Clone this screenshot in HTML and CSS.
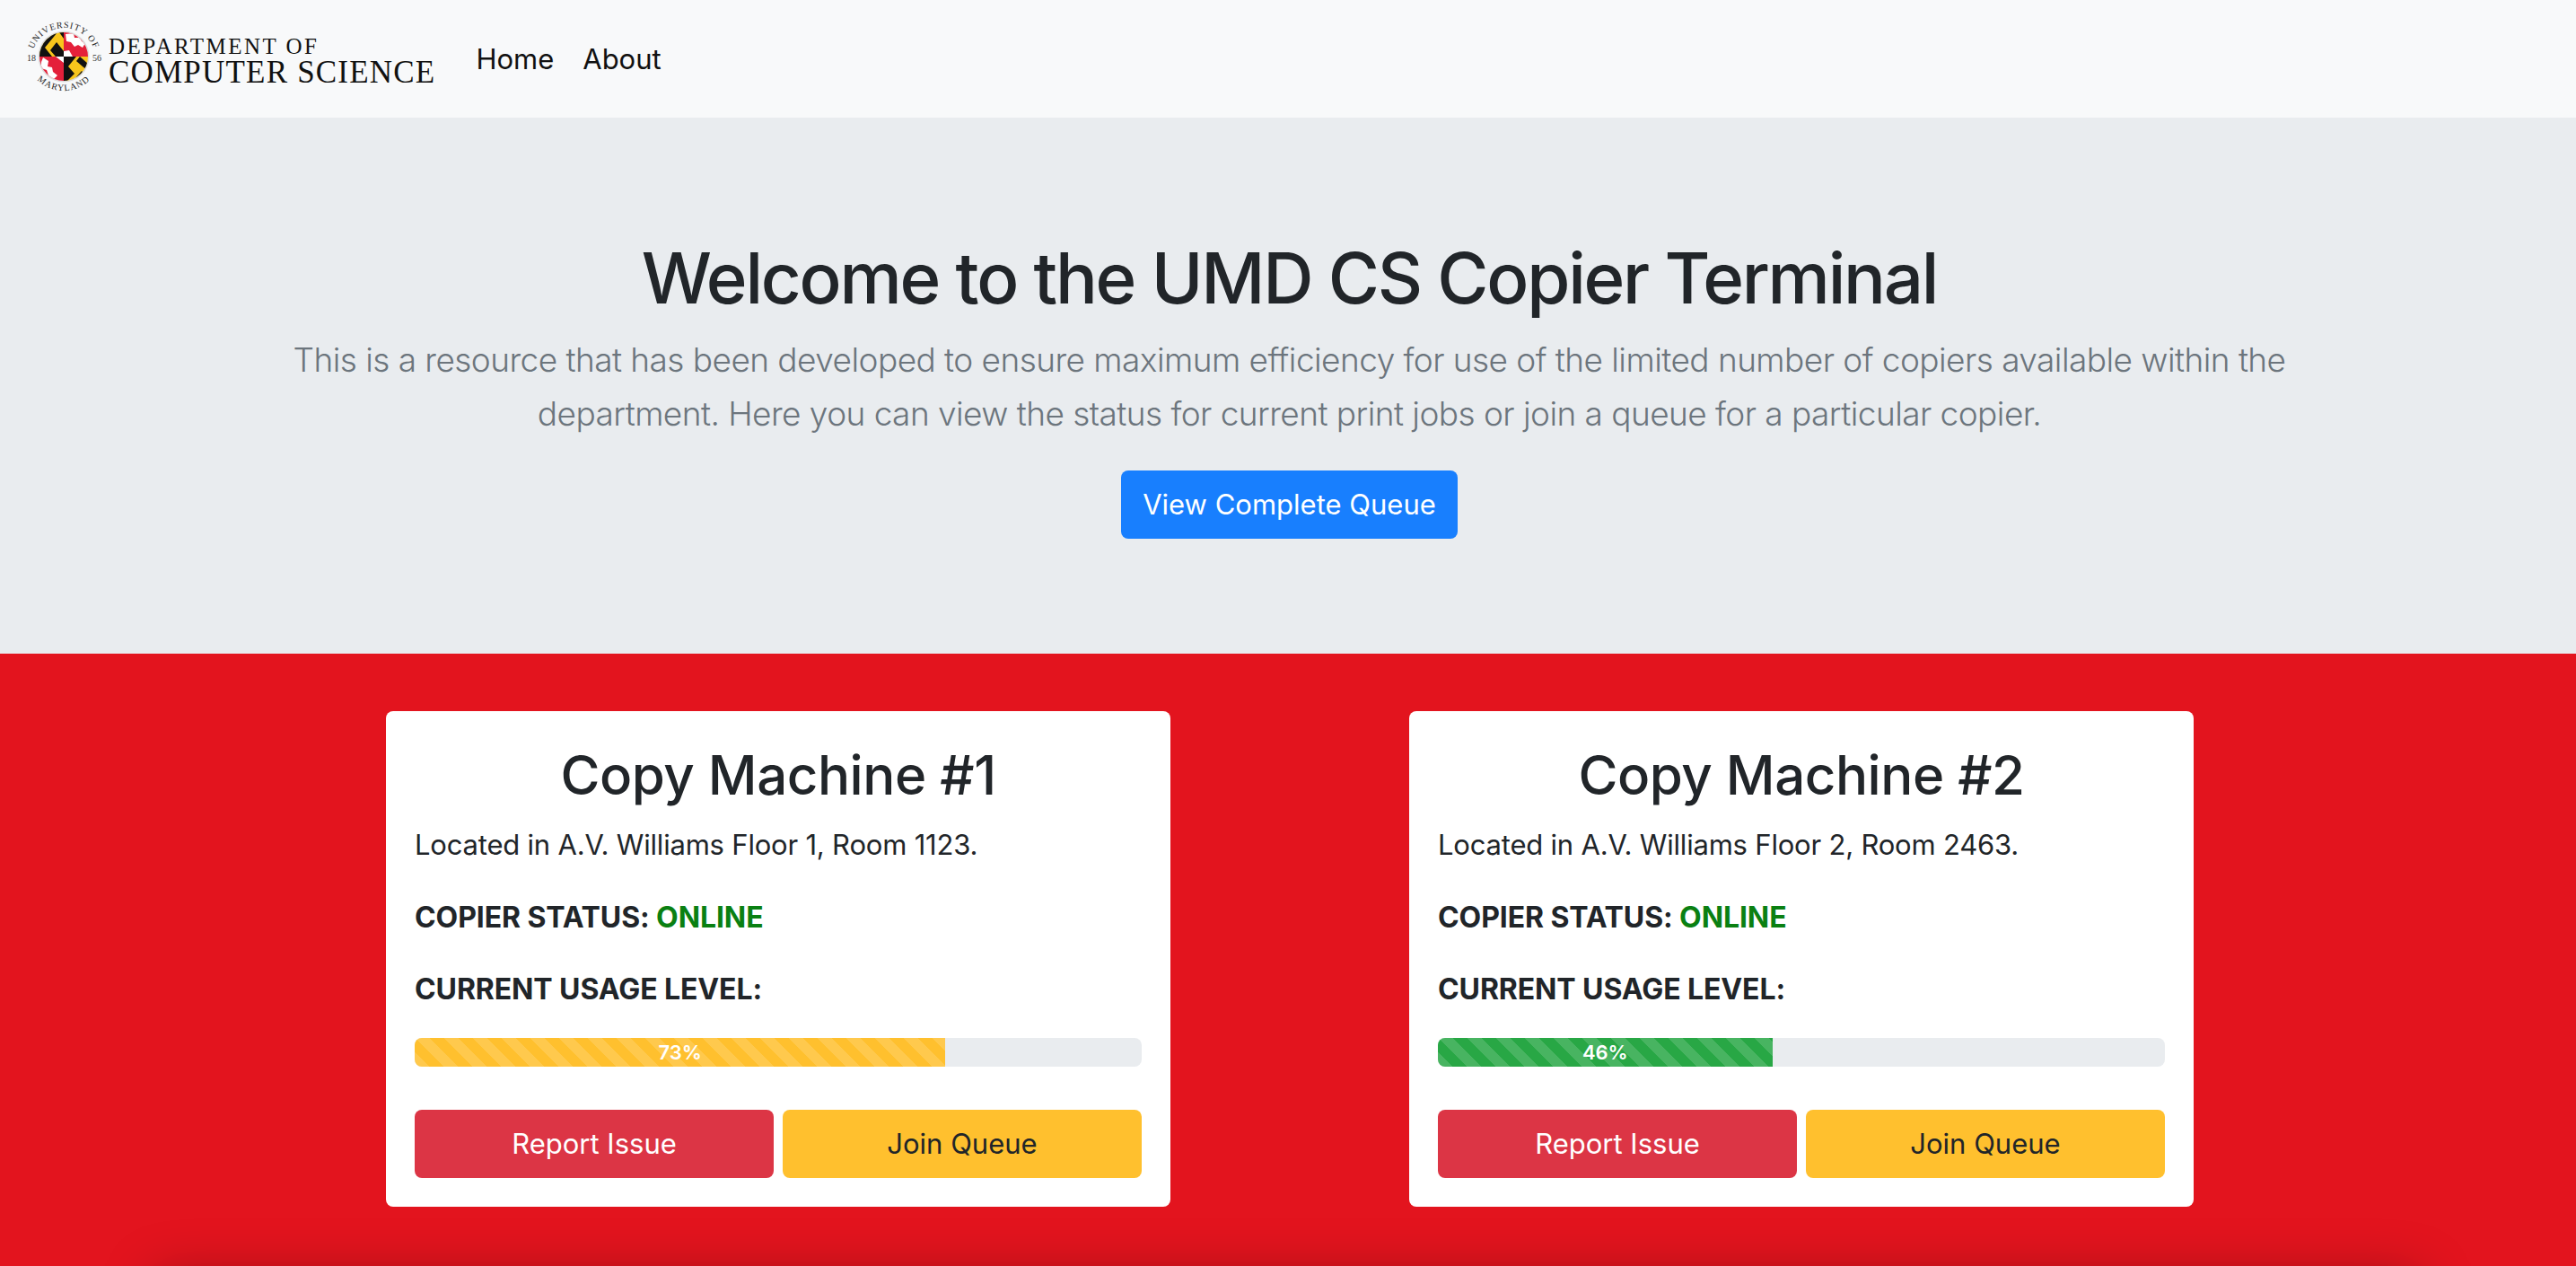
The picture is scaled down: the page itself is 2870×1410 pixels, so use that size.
FILE: index.html
```html
<!DOCTYPE html>
<html lang="en">
<head>
    <meta charset="UTF-8">
    <title>UMD CS Copier Terminal</title>
    <link rel="stylesheet" href="styles.css">
</head>
<body>
    <nav class="navbar">
        <a class="brand" href="#">
            <svg class="seal" viewBox="0 0 90 90" width="90" height="90">
                <defs>
                    <path id="sealTop" d="M9 46 A35 35 0 0 1 81 46"/>
                    <path id="sealBottom" d="M3 38 A42 42 0 0 0 87 38"/>
                    <clipPath id="globeClip"><circle cx="45" cy="42" r="27"/></clipPath>
                </defs>
                <text class="seal-ring"><textPath href="#sealTop" startOffset="50%" text-anchor="middle">UNIVERSITY OF</textPath></text>
                <text class="seal-ring"><textPath href="#sealBottom" startOffset="50%" text-anchor="middle">MARYLAND</textPath></text>
                <text class="seal-year" x="4" y="47">18</text>
                <text class="seal-year" x="77" y="47">56</text>
                <circle cx="45" cy="42" r="28.5" fill="#dcdcdc"/>
                <g clip-path="url(#globeClip)">
                    <rect x="18" y="15" width="27" height="27" fill="#f7c51c"/>
                    <path d="M18 30 L30 15 L38 15 L24 32 L32 42 L18 42 Z M36 42 L30 35 L37 26 L45 36 L45 42 Z M40 15 L45 15 L45 22 Z" fill="#111"/>
                    <rect x="45" y="15" width="27" height="27" fill="#e4203a"/>
                    <path d="M47 17 L56 16 L57 21 L63 21 L65 25 L69 27 L66 32 L61 29 L57 31 L53 26 L48 25 Z M45 36 L51 35 L55 42 L45 42 Z" fill="#fff"/>
                    <rect x="18" y="42" width="27" height="27" fill="#e4203a"/>
                    <path d="M22 43 L28 47 L27 53 L32 54 L33 59 L38 63 L33 68 L28 63 L26 57 L20 55 L20 48 Z M36 42 L45 42 L45 49 Z" fill="#fff"/>
                    <rect x="45" y="42" width="27" height="27" fill="#f7c51c"/>
                    <path d="M45 42 L59 42 L50 53 L57 61 L49 69 L45 69 Z M63 42 L72 50 L72 58 L66 53 L59 47 Z M58 66 L65 58 L70 63 L63 69 Z" fill="#111"/>
                </g>
            </svg>
            <span class="brand-text">
                <span class="brand-dept">DEPARTMENT OF</span>
                <span class="brand-name">COMPUTER SCIENCE</span>
            </span>
        </a>
        <a class="nav-link" href="#">Home</a>
        <a class="nav-link" href="#">About</a>
    </nav>

    <header class="hero">
        <h1>Welcome to the UMD CS Copier Terminal</h1>
        <p class="lead">This is a resource that has been developed to ensure maximum efficiency for use of the limited number of copiers available within the department. Here you can view the status for current print jobs or join a queue for a particular copier.</p>
        <a class="btn btn-primary" href="#">View Complete Queue</a>
    </header>

    <main class="machines">
        <section class="card">
            <h2>Copy Machine #1</h2>
            <p>Located in A.V. Williams Floor 1, Room 1123.</p>
            <p class="label">COPIER STATUS: <span class="online">ONLINE</span></p>
            <p class="label">CURRENT USAGE LEVEL:</p>
            <div class="progress">
                <div class="progress-bar bar-warning" style="width: 73%">73%</div>
            </div>
            <div class="actions">
                <a class="btn btn-danger" href="#">Report Issue</a>
                <a class="btn btn-warning" href="#">Join Queue</a>
            </div>
        </section>
        <section class="card">
            <h2>Copy Machine #2</h2>
            <p>Located in A.V. Williams Floor 2, Room 2463.</p>
            <p class="label">COPIER STATUS: <span class="online">ONLINE</span></p>
            <p class="label">CURRENT USAGE LEVEL:</p>
            <div class="progress">
                <div class="progress-bar bar-success" style="width: 46%">46%</div>
            </div>
            <div class="actions">
                <a class="btn btn-danger" href="#">Report Issue</a>
                <a class="btn btn-warning" href="#">Join Queue</a>
            </div>
        </section>
        <div class="footer-shadow"></div>
    </main>
</body>
</html>
```

FILE: styles.css
```css
* {
    box-sizing: border-box;
}
html, body {
    height: 100%;
}
body {
    margin: 0;
    display: flex;
    flex-direction: column;
    overflow: hidden;
    font-family: Inter, "Liberation Sans", sans-serif;
    color: #212529;
}
a {
    text-decoration: none;
}

.navbar {
    height: 131px;
    flex: none;
    display: flex;
    align-items: center;
    padding-left: 26px;
    background-color: #f8f9fa;
}
.brand {
    display: flex;
    align-items: center;
    gap: 5px;
    margin-right: 45px;
    color: #111;
}
.seal {
    flex: none;
}
.seal-ring {
    font-family: "Liberation Serif", serif;
    font-size: 10px;
    letter-spacing: 1px;
    fill: #222;
}
.seal-year {
    font-family: "Liberation Serif", serif;
    font-size: 10px;
    fill: #333;
}
.brand-text {
    display: flex;
    flex-direction: column;
    margin-top: 5px;
    font-family: "Liberation Serif", serif;
}
.brand-dept {
    font-size: 25px;
    line-height: 26px;
    letter-spacing: 2.5px;
}
.brand-name {
    font-size: 35px;
    line-height: 32px;
    letter-spacing: 1.2px;
}
.nav-link {
    color: #111;
    font-size: 31px;
    margin-right: 32px;
}

.hero {
    height: 597px;
    flex: none;
    padding: 131px 0 0 3px;
    text-align: center;
    background-color: #e9ecef;
}
.hero h1 {
    margin: 0;
    font-size: 78px;
    line-height: 96px;
    font-weight: 500;
    letter-spacing: -2.25px;
}
.lead {
    width: 2300px;
    margin: 13px auto 33px;
    font-size: 37px;
    line-height: 60px;
    font-weight: 300;
    letter-spacing: -0.55px;
    color: #6c757d;
}

.btn {
    display: inline-block;
    height: 76px;
    line-height: 76px;
    padding: 0 24px;
    border-radius: 8px;
    font-size: 31px;
    text-align: center;
}
.btn-primary {
    background-color: #187ffe;
    color: #fff;
}
.btn-danger {
    background-color: #dc3545;
    color: #fff;
}
.btn-warning {
    background-color: #ffc02e;
    color: #212529;
}

.machines {
    flex: 1;
    position: relative;
    overflow: hidden;
    display: flex;
    justify-content: center;
    align-items: flex-start;
    gap: 266px;
    padding: 64px 0 0 4px;
    background-color: #e3141e;
}
.card {
    width: 874px;
    height: 552px;
    padding: 35px 32px 0;
    border-radius: 8px;
    background-color: #fff;
}
.card h2 {
    margin: 0 0 19px;
    font-size: 60px;
    line-height: 72px;
    font-weight: 500;
    text-align: center;
    letter-spacing: -0.45px;
}
.card p {
    margin: 0 0 35px;
    font-size: 31px;
    line-height: 45px;
    letter-spacing: -0.2px;
}
.card p:first-of-type {
    margin-bottom: 36px;
}
.card .label {
    font-size: 32px;
    font-weight: 700;
    letter-spacing: -0.1px;
}
.card .label:last-of-type {
    margin-bottom: 32px;
}
.online {
    color: #0a8012;
}
.progress {
    height: 32px;
    border-radius: 8px;
    overflow: hidden;
    background-color: #e9ecef;
}
.progress-bar {
    height: 100%;
    text-align: center;
    font-size: 22px;
    line-height: 32px;
    font-weight: 600;
    color: #fff;
    background-image: linear-gradient(45deg, rgba(255,255,255,.15) 25%, transparent 25%, transparent 50%, rgba(255,255,255,.15) 50%, rgba(255,255,255,.15) 75%, transparent 75%, transparent);
    background-size: 32px 32px;
}
.bar-warning {
    background-color: #ffc02e;
}
.bar-success {
    background-color: #28a745;
}
.actions {
    display: flex;
    gap: 10px;
    margin-top: 48px;
}
.actions .btn {
    flex: 1;
    padding: 0;
}

.footer-shadow {
    position: absolute;
    left: 175px;
    right: 175px;
    top: 695px;
    height: 100px;
    box-shadow: 0 0 60px rgba(0, 0, 0, 0.35);
}
```
